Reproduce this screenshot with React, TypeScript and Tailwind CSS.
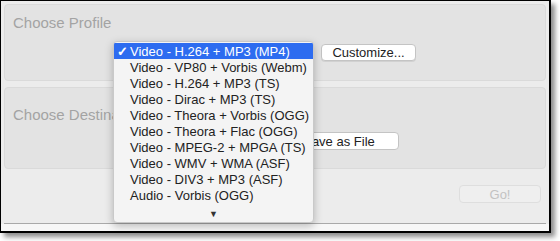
const profiles = [
  'Video - H.264 + MP3 (MP4)',
  'Video - VP80 + Vorbis (Webm)',
  'Video - H.264 + MP3 (TS)',
  'Video - Dirac + MP3 (TS)',
  'Video - Theora + Vorbis (OGG)',
  'Video - Theora + Flac (OGG)',
  'Video - MPEG-2 + MPGA (TS)',
  'Video - WMV + WMA (ASF)',
  'Video - DIV3 + MP3 (ASF)',
  'Audio - Vorbis (OGG)',
  'Audio - MP3 (MP3)',
]

function ProfileMenu() {
  return (
    <div className="absolute left-[112px] top-[40px] w-[201px] h-[182px] rounded-[4px] border border-[#c9c9c9] bg-[#f4f4f4] shadow-[0_3px_8px_rgba(0,0,0,0.25)] overflow-hidden flex flex-col">
      {/* list is clipped, last row only peeks out above the scroll arrow */}
      <div className="pt-[1px] h-[165px] overflow-hidden">
        {profiles.map((p, i) => (
          <div
            key={p}
            className={`flex items-center h-[16px] text-[13px] leading-none ${
              i === 0 ? 'bg-[#2d6cf0] text-white' : 'text-[#222]'
            }`}
          >
            <span className="w-[16px] pl-[3px] text-[13px] font-bold">{i === 0 ? '✓' : ''}</span>
            <span>{p}</span>
          </div>
        ))}
      </div>
      <div className="flex-1 flex justify-center items-start">
        <span className="text-[9px] text-[#333] leading-none mt-[3px]">▼</span>
      </div>
    </div>
  )
}

export default function App() {
  return (
    <div className="w-[560px] h-[241px] bg-white" style={{ fontFamily: '"Liberation Sans", Arial, sans-serif' }}>
      <div className="relative w-[551px] h-[233px] border-l border-t border-r-2 border-b-2 border-black bg-[#ececec] shadow-[4px_4px_5px_rgba(0,0,0,0.45)] flex flex-col">
        <div className="mx-[3px] mt-[3px] h-[77px] rounded-[4px] border border-[#dadada] bg-[#e3e3e3] relative">
          <div className="pl-[8px] pt-[7px] text-[15px] text-[#a3a3a3]">Choose Profile</div>
          <button className="absolute left-[316px] top-[39px] w-[95px] h-[17px] rounded-[4px] border border-[#c4c4c4] bg-white text-[13px] text-[#222] leading-none shadow-[0_1px_0_rgba(0,0,0,0.08)]">
            Customize...
          </button>
        </div>
        <div className="mx-[3px] mt-[6px] h-[82px] rounded-[4px] border border-[#dadada] bg-[#e3e3e3] relative">
          <div className="pl-[8px] pt-[16px] text-[15px] text-[#a3a3a3]">Choose Destination</div>
          <button className="absolute left-[274px] top-[44px] w-[120px] h-[18px] rounded-[4px] border border-[#c4c4c4] bg-white text-[13px] text-[#222] leading-none">
            Save as File
          </button>
        </div>
        <div className="flex justify-end pr-[8px] pt-[16px]">
          <button className="w-[82px] h-[18px] rounded-[4px] border border-[#dedede] bg-[#efefef] text-[13px] text-[#c2c2c2] leading-none">
            Go!
          </button>
        </div>
        <div className="mt-auto mx-[3px] h-[1px] bg-[#a9a9a9]" />
        <div className="h-[7px] bg-[#f7f7f7]" />
        <ProfileMenu />
      </div>
    </div>
  )
}
